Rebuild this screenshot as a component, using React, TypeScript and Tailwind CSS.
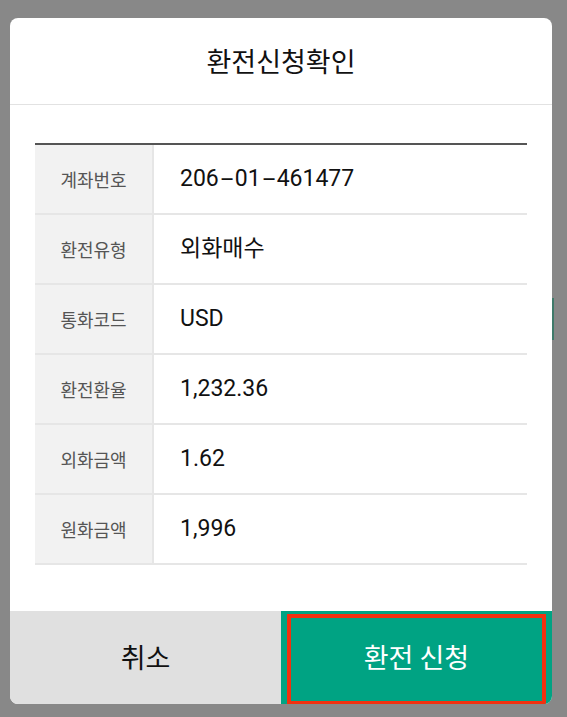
const rows = [
  { label: '계좌번호', value: '206-01-461477' },
  { label: '환전유형', value: '외화매수' },
  { label: '통화코드', value: 'USD' },
  { label: '환전환율', value: '1,232.36' },
  { label: '외화금액', value: '1.62' },
  { label: '원화금액', value: '1,996' },
];

// hyphens in the account number are drawn wide in the screenshot
function Value({ text }: { text: string }) {
  const parts = text.split('-');
  return (
    <>
      {parts.map((p, i) => (
        <span key={i}>
          {i > 0 && <span className="inline-block w-[16px] scale-x-[2] text-center">-</span>}
          {p}
        </span>
      ))}
    </>
  );
}

export default function App() {
  return (
    <div
      className="relative h-[717px] w-[567px] overflow-hidden bg-[#888888] pt-[18px] pl-[10px]"
      style={{ fontFamily: '"Noto Sans CJK KR", "Noto Sans", sans-serif' }}
    >
      {/* sliver of the page behind the modal */}
      <div className="absolute left-[552px] top-[298px] h-[42px] w-[2px] bg-[#3f7a6a]" />

      <div className="flex h-[686px] w-[542px] flex-col overflow-hidden rounded-[8px] bg-white">
        <div className="flex h-[87px] items-center justify-center border-b border-[#e2e2e2]">
          <h2 className="text-[27px] font-normal text-[#111]">환전신청확인</h2>
        </div>

        <div className="px-[25px] pt-[38px]">
          <div className="border-t-2 border-[#555]">
            {rows.map(r => (
              <div key={r.label} className="flex h-[70px] border-b-2 border-[#e6e6e6]">
                <div className="flex w-[119px] items-center justify-center border-r-2 border-[#e6e6e6] bg-[#f2f2f2] text-[18px] text-[#555]">
                  {r.label}
                </div>
                <div
                  className="flex flex-1 items-center pl-[26px] text-[23px] text-[#111]"
                  style={{ fontFamily: 'Roboto, "Noto Sans CJK KR", sans-serif' }}
                >
                  <Value text={r.value} />
                </div>
              </div>
            ))}
          </div>
        </div>

        <div className="mt-auto flex h-[93px]">
          <button className="flex w-[271px] items-center justify-center bg-[#e0e0e0] text-[27px] font-normal text-[#111]">
            취소
          </button>
          <button className="relative flex flex-1 items-center justify-center bg-[#00a383] text-[27px] font-normal text-white">
            환전 신청
            <span className="absolute left-[6px] right-[6px] top-[3px] bottom-[-1px] border-[4px] border-[#f2300f]" />
          </button>
        </div>
      </div>
    </div>
  );
}
